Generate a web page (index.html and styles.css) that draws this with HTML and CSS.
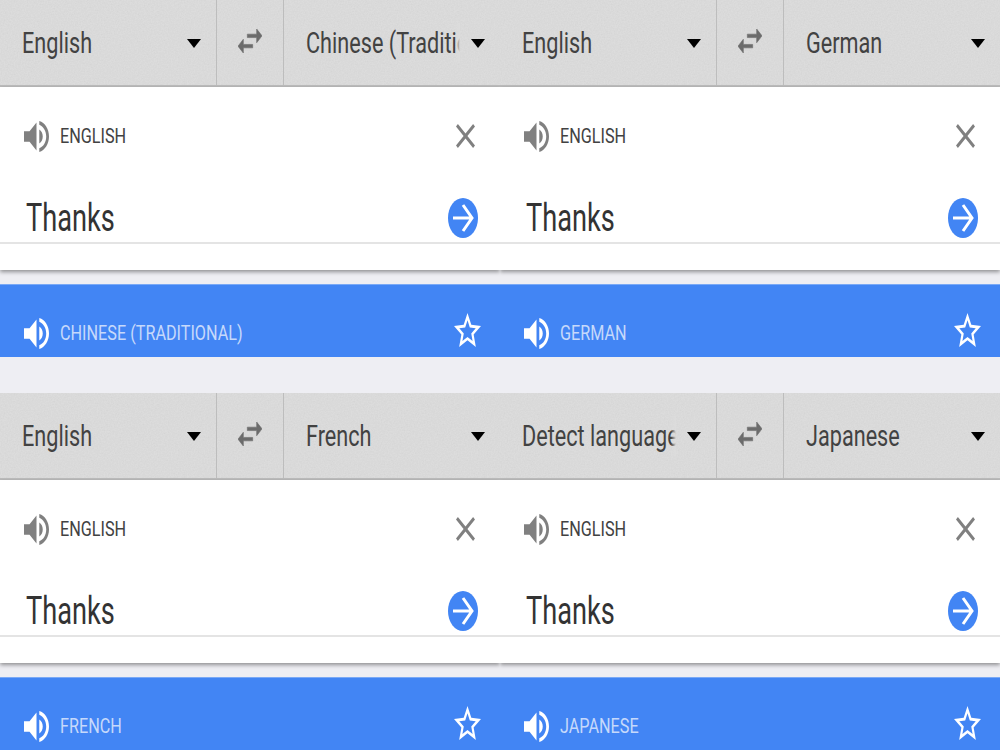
FILE: index.html
```html
<!DOCTYPE html>
<html lang="en">
<head>
    <meta charset="UTF-8">
    <title>Translate</title>
    <link rel="stylesheet" href="styles.css">
</head>
<body>
    <svg class="sprite">
        <symbol id="i-speaker" viewBox="3 3.2 18 17.6" preserveAspectRatio="none"><path d="M3 9v6h4l5 5V4L7 9H3zm13.5 3c0-1.77-1.02-3.29-2.5-4.03v8.05c1.48-.73 2.5-2.25 2.5-4.02zM14 3.23v2.06c2.89.86 5 3.54 5 6.71s-2.11 5.85-5 6.71v2.06c4.01-.91 7-4.49 7-8.77s-2.99-7.86-7-8.77z"/></symbol>
        <symbol id="i-swap" viewBox="3 5 18 14" preserveAspectRatio="none"><path d="M6.99 11L3 15l3.99 4v-3H14v-2H6.99v-3zM21 9l-3.99-4v3H10v2h7.01v3L21 9z"/></symbol>
        <symbol id="i-close" viewBox="5 5 14 14" preserveAspectRatio="none"><path d="M19 6.41L17.59 5 12 10.59 6.41 5 5 6.41 10.59 12 5 17.59 6.41 19 12 13.41 17.59 19 19 17.59 13.41 12z"/></symbol>
        <symbol id="i-go" viewBox="0 0 30 40" preserveAspectRatio="none"><ellipse cx="15" cy="20" rx="15" ry="20" fill="#4285f4"/><path d="M5 20H23M15 7L24 20L15 33" fill="none" stroke="#fff" stroke-width="3"/></symbol>
        <symbol id="i-star" viewBox="2 2 20 19" preserveAspectRatio="none"><path d="M22 9.24l-7.19-.62L12 2 9.19 8.63 2 9.24l5.46 4.73L5.82 21 12 17.27 18.18 21l-1.63-7.03L22 9.24zM12 15.4l-3.76 2.27 1-4.28-3.32-2.88 4.38-.38L12 6.1l1.71 4.04 4.38.38-3.32 2.88 1 4.28L12 15.4z"/></symbol>
    </svg>

    <div class="grid">
        <div class="tile">
            <div class="lang-bar">
                <div class="select"><div class="select-name"><span>English</span></div><i class="caret"></i></div>
                <div class="swap"><svg class="icon-swap"><use href="#i-swap"/></svg></div>
                <div class="select"><div class="select-name fade"><span>Chinese (Traditional)</span></div><i class="caret"></i></div>
            </div>
            <div class="input-card">
                <div class="card-top">
                    <svg class="icon-speaker"><use href="#i-speaker"/></svg>
                    <span class="lang-label">ENGLISH</span>
                    <svg class="icon-close"><use href="#i-close"/></svg>
                </div>
                <div class="input-row">
                    <span class="input-text">Thanks</span>
                    <svg class="icon-go"><use href="#i-go"/></svg>
                </div>
            </div>
            <div class="result">
                <svg class="icon-speaker"><use href="#i-speaker"/></svg>
                <span class="lang-label">CHINESE (TRADITIONAL)</span>
                <svg class="icon-star"><use href="#i-star"/></svg>
            </div>
        </div>

        <div class="tile">
            <div class="lang-bar">
                <div class="select"><div class="select-name"><span>English</span></div><i class="caret"></i></div>
                <div class="swap"><svg class="icon-swap"><use href="#i-swap"/></svg></div>
                <div class="select"><div class="select-name"><span>German</span></div><i class="caret"></i></div>
            </div>
            <div class="input-card">
                <div class="card-top">
                    <svg class="icon-speaker"><use href="#i-speaker"/></svg>
                    <span class="lang-label">ENGLISH</span>
                    <svg class="icon-close"><use href="#i-close"/></svg>
                </div>
                <div class="input-row">
                    <span class="input-text">Thanks</span>
                    <svg class="icon-go"><use href="#i-go"/></svg>
                </div>
            </div>
            <div class="result">
                <svg class="icon-speaker"><use href="#i-speaker"/></svg>
                <span class="lang-label">GERMAN</span>
                <svg class="icon-star"><use href="#i-star"/></svg>
            </div>
        </div>

        <div class="tile">
            <div class="lang-bar">
                <div class="select"><div class="select-name"><span>English</span></div><i class="caret"></i></div>
                <div class="swap"><svg class="icon-swap"><use href="#i-swap"/></svg></div>
                <div class="select"><div class="select-name"><span>French</span></div><i class="caret"></i></div>
            </div>
            <div class="input-card">
                <div class="card-top">
                    <svg class="icon-speaker"><use href="#i-speaker"/></svg>
                    <span class="lang-label">ENGLISH</span>
                    <svg class="icon-close"><use href="#i-close"/></svg>
                </div>
                <div class="input-row">
                    <span class="input-text">Thanks</span>
                    <svg class="icon-go"><use href="#i-go"/></svg>
                </div>
            </div>
            <div class="result">
                <svg class="icon-speaker"><use href="#i-speaker"/></svg>
                <span class="lang-label">FRENCH</span>
                <svg class="icon-star"><use href="#i-star"/></svg>
            </div>
        </div>

        <div class="tile">
            <div class="lang-bar">
                <div class="select"><div class="select-name fade"><span>Detect language</span></div><i class="caret"></i></div>
                <div class="swap"><svg class="icon-swap"><use href="#i-swap"/></svg></div>
                <div class="select"><div class="select-name"><span>Japanese</span></div><i class="caret"></i></div>
            </div>
            <div class="input-card">
                <div class="card-top">
                    <svg class="icon-speaker"><use href="#i-speaker"/></svg>
                    <span class="lang-label">ENGLISH</span>
                    <svg class="icon-close"><use href="#i-close"/></svg>
                </div>
                <div class="input-row">
                    <span class="input-text">Thanks</span>
                    <svg class="icon-go"><use href="#i-go"/></svg>
                </div>
            </div>
            <div class="result">
                <svg class="icon-speaker"><use href="#i-speaker"/></svg>
                <span class="lang-label">JAPANESE</span>
                <svg class="icon-star"><use href="#i-star"/></svg>
            </div>
        </div>
    </div>
</body>
</html>
```
FILE: styles.css
```css
html, body {
    margin: 0;
    height: 750px;
    overflow: hidden;
    background-color: #eeeef3;
    font-family: Roboto, "Liberation Sans", sans-serif;
}

.sprite {
    display: none;
}

.grid {
    display: grid;
    grid-template-columns: 500px 500px;
    grid-auto-rows: 393px;
}

.tile {
    overflow: hidden;
}

/* top bar with the two language pickers */
.lang-bar {
    display: flex;
    height: 85px;
    background-color: #dcdcdc;
    background-image: url("data:image/svg+xml,%3Csvg xmlns='http://www.w3.org/2000/svg' width='300' height='120'%3E%3Cfilter id='n'%3E%3CfeTurbulence type='fractalNoise' baseFrequency='0.7' numOctaves='2'/%3E%3CfeColorMatrix values='0 0 0 0 0 0 0 0 0 0 0 0 0 0 0 0.5 0 0 0 -0.18'/%3E%3C/filter%3E%3Crect width='300' height='120' filter='url(%23n)' opacity='0.12'/%3E%3C/svg%3E");
    border-bottom: 2px solid #bcbcbc;
}

.select {
    flex: 1;
    min-width: 0;
    display: flex;
    align-items: center;
    padding: 0 15px 0 22px;
}

.select-name {
    flex: 1;
    min-width: 0;
    overflow: hidden;
    position: relative;
    margin-right: 11px;
    font-size: 30px;
    line-height: 40px;
    color: #424242;
    white-space: nowrap;
}

.select-name span {
    display: inline-block;
    transform: scaleX(0.722);
    transform-origin: left center;
}

.select-name.fade::after {
    content: "";
    position: absolute;
    top: 0;
    right: 0;
    bottom: 0;
    width: 5px;
    background: linear-gradient(to right, rgba(220,220,220,0), #dcdcdc);
}

.caret {
    flex: none;
    margin-top: 2px;
    border-left: 7px solid transparent;
    border-right: 7px solid transparent;
    border-top: 9px solid #000;
}

.swap {
    flex: none;
    width: 66px;
    display: flex;
    align-items: center;
    justify-content: center;
    border-left: 1px solid #bdbdbd;
    border-right: 1px solid #bdbdbd;
}

.icon-swap {
    width: 24px;
    height: 24px;
    margin-top: -3px;
    fill: #6c6c6c;
    stroke: #6c6c6c;
    stroke-width: 0.4;
}

/* white input card */
.input-card {
    height: 183px;
    background-color: #fff;
    box-shadow: 0 2px 4px rgba(0,0,0,0.4);
}

.card-top {
    height: 98px;
    display: flex;
    align-items: center;
    padding: 0 25px 0 24px;
}

.icon-speaker {
    flex: none;
    width: 25px;
    height: 31px;
    fill: #808080;
}

.lang-label {
    display: block;
    flex: 1;
    margin-left: 11px;
    font-size: 21px;
    color: #424242;
    white-space: nowrap;
    transform: scaleX(0.772);
    transform-origin: left center;
}

.icon-close {
    flex: none;
    width: 19px;
    height: 24px;
    fill: #808080;
}

.input-row {
    height: 59px;
    display: flex;
    align-items: center;
    justify-content: space-between;
    padding: 8px 22px 0 26px;
    box-sizing: border-box;
    border-bottom: 2px solid #e4e4e4;
}

.input-text {
    display: block;
    font-size: 38px;
    color: #333;
    transform: scaleX(0.716);
    transform-origin: left center;
}

.icon-go {
    flex: none;
    width: 30px;
    height: 40px;
}

/* blue result strip */
.result {
    height: 73px;
    margin-top: 14px;
    display: flex;
    align-items: center;
    padding: 24px 19px 0 24px;
    box-sizing: border-box;
    background-color: #4285f4;
    border-top: 1px solid #7aa9f6;
}

.result .icon-speaker {
    fill: #fff;
}

.result .lang-label {
    color: #c6d9fb;
}

.icon-star {
    flex: none;
    width: 27px;
    height: 34px;
    margin-top: -7px;
    fill: #fff;
}
```
